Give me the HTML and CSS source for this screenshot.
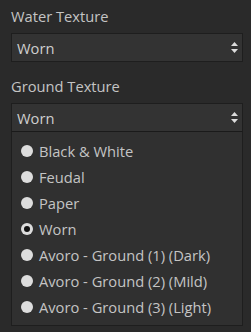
FILE: index.html
```html
<!DOCTYPE html>
<html lang="en">
<head>
  <meta charset="UTF-8" />
  <title>Texture settings</title>
  <link rel="stylesheet" href="styles.css">
</head>
<body>
  <div class="field">
    <label>Water Texture</label>
    <div class="select">
      <span>Worn</span>
      <svg class="arrows" width="7" height="11" viewBox="0 0 7 11"><path d="M3.5 0 L7 4 L0 4 Z M0 7 L7 7 L3.5 11 Z" fill="#ddd"/></svg>
    </div>
  </div>

  <div class="field">
    <label>Ground Texture</label>
    <div class="select open">
      <span>Worn</span>
      <svg class="arrows" width="7" height="11" viewBox="0 0 7 11"><path d="M3.5 0 L7 4 L0 4 Z M0 7 L7 7 L3.5 11 Z" fill="#ddd"/></svg>
    </div>
    <ul class="options">
      <li><i class="radio"></i>Black &amp; White</li>
      <li><i class="radio"></i>Feudal</li>
      <li><i class="radio"></i>Paper</li>
      <li><i class="radio checked"></i>Worn</li>
      <li><i class="radio"></i>Avoro - Ground (1) (Dark)</li>
      <li><i class="radio"></i>Avoro - Ground (2) (Mild)</li>
      <li><i class="radio"></i>Avoro - Ground (3) (Light)</li>
    </ul>
  </div>
</body>
</html>
```

FILE: styles.css
```css
body {
  margin: 0;
  padding: 5px 8px 0 11px;
  background: #2a2a2a;
  font-family: "Open Sans", sans-serif;
  font-size: 14.7px;
  color: #c4c4c4;
}
.field {
  margin-bottom: 13px;
}
.field label {
  display: block;
  line-height: 22px;
  margin-bottom: 6px;
}
.select {
  display: flex;
  align-items: center;
  justify-content: space-between;
  height: 27px;
  padding: 0 4px 0 5px;
  background: #333;
  border: 1px solid #1e1e1e;
  color: #cfcfcf;
}
.select.open {
  border-bottom-color: #1a1a1a;
}
.options {
  list-style: none;
  margin: 0;
  padding: 6px 0 5px;
  background: #303030;
  border: 1px solid #1e1e1e;
  border-top: none;
}
.options li {
  display: flex;
  align-items: center;
  height: 26px;
  padding-left: 9px;
}
.radio {
  width: 12px;
  height: 12px;
  margin-right: 6px;
  border-radius: 50%;
  background: #ddd;
  display: flex;
  align-items: center;
  justify-content: center;
}
.radio.checked::after {
  content: "";
  width: 6px;
  height: 6px;
  border-radius: 50%;
  background: #111;
}
```
